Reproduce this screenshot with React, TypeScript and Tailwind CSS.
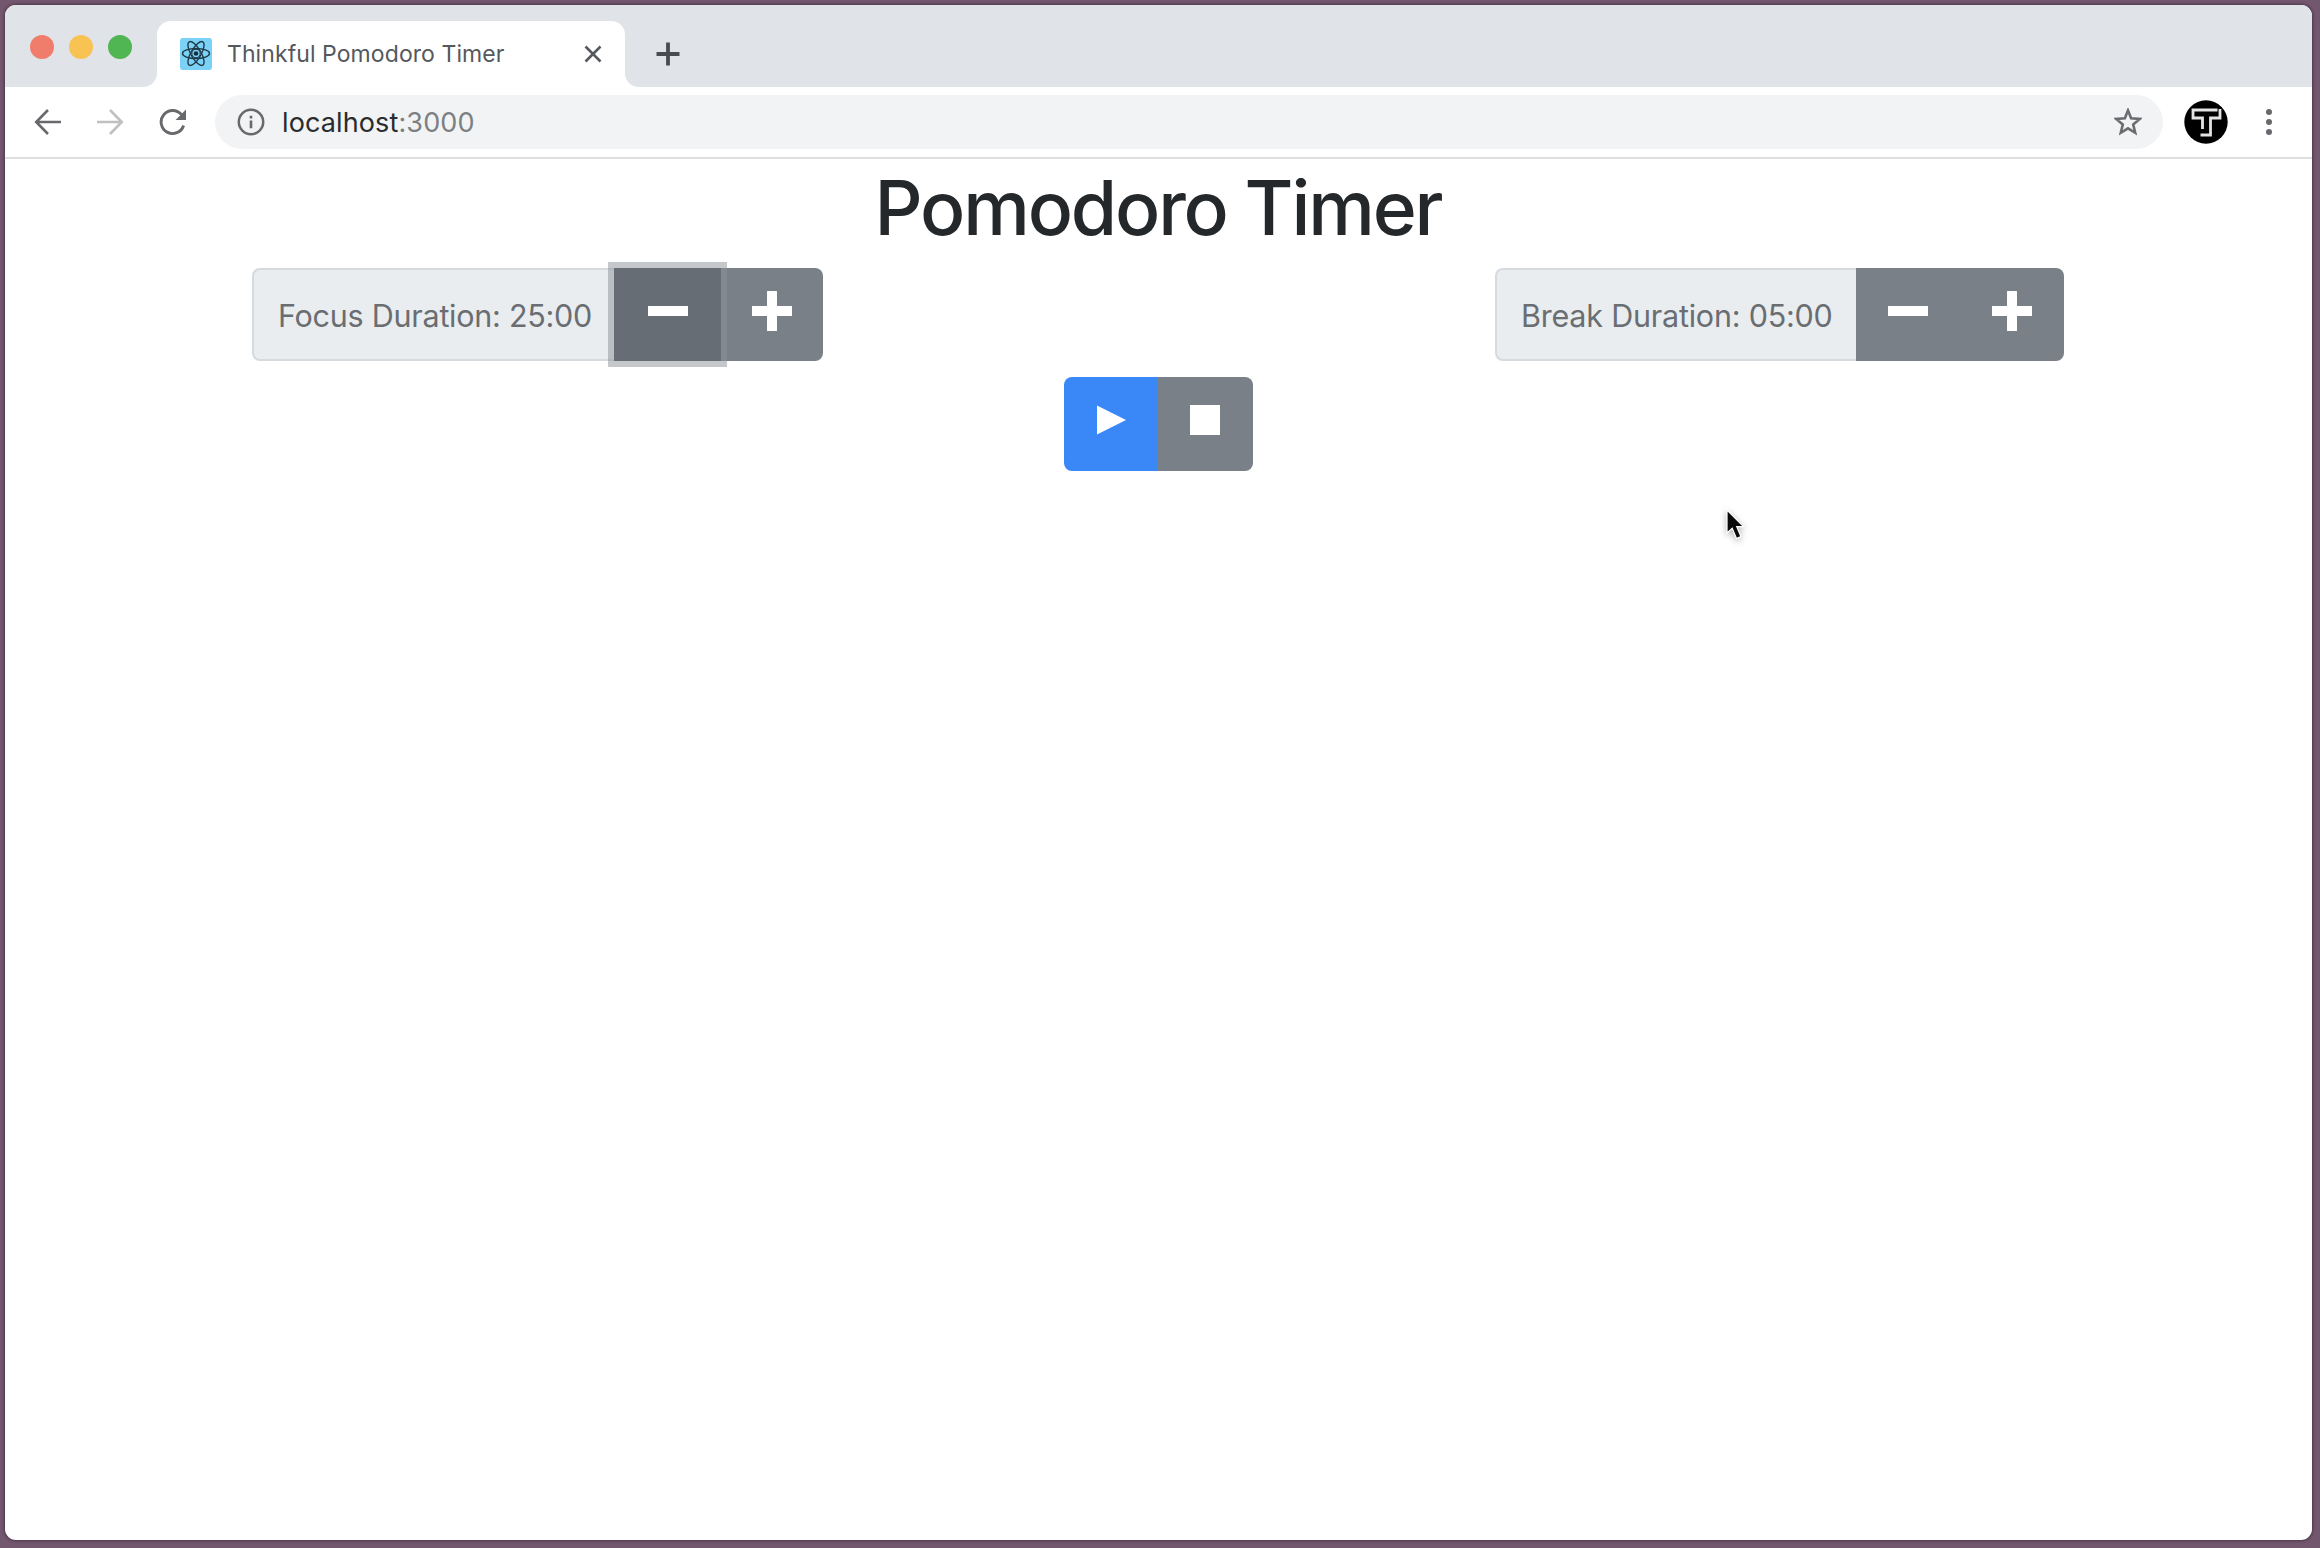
import type { ReactNode } from "react";

function ReactMark() {
  return (
    <svg viewBox="0 0 32 32" className="size-8 shrink-0">
      <rect width="32" height="32" rx="3" fill="#7bd1f6" />
      <g fill="none" stroke="#1f3947" strokeWidth="1.4">
        <ellipse cx="16" cy="15.5" rx="13.5" ry="5" />
        <ellipse cx="16" cy="15.5" rx="13.5" ry="5" transform="rotate(60 16 15.5)" />
        <ellipse cx="16" cy="15.5" rx="13.5" ry="5" transform="rotate(120 16 15.5)" />
        <circle cx="16" cy="15.5" r="4.2" strokeWidth="1.1" />
      </g>
      <circle cx="16" cy="15.5" r="2.3" fill="#14303f" />
    </svg>
  );
}

function TabStrip() {
  return (
    <div className="flex h-[82px] shrink-0 items-end bg-[#e0e3e8]">
      <div className="flex h-[82px] w-[138px] items-center gap-[15px] pl-[25px] pt-[2px]">
        <span className="size-6 shrink-0 rounded-full bg-[#f07d6b]" />
        <span className="size-6 shrink-0 rounded-full bg-[#f8c353]" />
        <span className="size-6 shrink-0 rounded-full bg-[#50b553]" />
      </div>
      <div className="size-[14px] bg-white">
        <div className="size-full rounded-br-[14px] bg-[#e0e3e8]" />
      </div>
      <div className="flex h-[66px] w-[468px] items-center rounded-t-[14px] bg-white pl-[23px] pr-[23px]">
        <ReactMark />
        <span className="ml-[15px] grow whitespace-nowrap pb-[1px] text-[23px] leading-8 tracking-[0.08px] text-[#55585c]">
          Thinkful Pomodoro Timer
        </span>
        <svg viewBox="0 0 18 18" className="size-[18px]" stroke="#55585c" strokeWidth="2.6">
          <path d="M1.5 1.5 16.5 16.5M16.5 1.5 1.5 16.5" />
        </svg>
      </div>
      <div className="size-[14px] bg-white">
        <div className="size-full rounded-bl-[14px] bg-[#e0e3e8]" />
      </div>
      <div className="flex h-[66px] items-center pl-[17px]">
        <svg viewBox="0 0 24 24" className="size-6" stroke="#484b50" strokeWidth="3.8">
          <path d="M12 .5v23M.5 12h23" />
        </svg>
      </div>
    </div>
  );
}

function Toolbar() {
  return (
    <div className="flex h-[72px] shrink-0 items-center border-b-2 border-[#dedfe1] bg-white">
      <svg viewBox="0 0 28 28" className="ml-[29px] size-7" fill="none" stroke="#67696c" strokeWidth="2.6">
        <path d="M27 14H3M14 2 2.2 14 14 26" />
      </svg>
      <svg viewBox="0 0 28 28" className="ml-[34px] size-7" fill="none" stroke="#bfc0c2" strokeWidth="2.6">
        <path d="M1 14h24M14 2l11.8 12L14 26" />
      </svg>
      <svg viewBox="0 0 28 28" className="ml-[35px] size-7" fill="none" stroke="#67696c" strokeWidth="2.9">
        <path d="M24.6 17.5A11.5 11.5 0 1 1 22.5 6.7" />
        <path d="M27 1.5v10.4H16.6z" fill="#67696c" stroke="none" />
      </svg>
      <div className="ml-[28px] flex h-[54px] w-[1948px] items-center rounded-full bg-[#f1f3f4]">
        <svg viewBox="0 0 28 28" className="ml-[22px] size-7" fill="none" stroke="#67696c" strokeWidth="2.5">
          <circle cx="14" cy="14" r="12.2" />
          <path d="M14 12.5v7.8M14 7.8v2.6" strokeWidth="2.6" />
        </svg>
        <span className="ml-[17px] grow whitespace-nowrap pt-[1px] text-[27px] leading-9 tracking-[0.12px] text-[#2a2c2f]">
          localhost<span className="text-[#7d8083]">:3000</span>
        </span>
        <svg viewBox="0 0 28 28" className="mr-[21px] size-7" fill="none" stroke="#6b6d70" strokeWidth="2.6">
          <path d="m14 2.400 3.100 7.900 8.700.6-6.600 5.500 2 8.400-7.200-4.500-7.200 4.500 2-8.400-6.600-5.500 8.700-.6z" />
        </svg>
      </div>
      <svg viewBox="0 0 44 44" className="ml-[21px] size-11" fill="none">
        <circle cx="22" cy="22" r="21.7" fill="#000" />
        <path d="M33.5 10H9v8h9.500v11M36 9v9h-9.500v17H16.500" stroke="#e4e4e4" strokeWidth="2.8" />
      </svg>
      <svg viewBox="0 0 8 28" className="ml-[37px] h-7 w-2" fill="#67696c">
        <circle cx="4" cy="4" r="3" />
        <circle cx="4" cy="14" r="3" />
        <circle cx="4" cy="24" r="3" />
      </svg>
    </div>
  );
}

function IconButton({ label, className, children }: { label: string; className: string; children: ReactNode }) {
  return (
    <button type="button" aria-label={label} className={`flex h-full items-start justify-center ${className}`}>
      {children}
    </button>
  );
}

function Minus() {
  return (
    <svg viewBox="0 0 40 40" className="mt-[23px] size-10" fill="#fff">
      <path d="M0 15h40v10H0z" />
    </svg>
  );
}

function Plus() {
  return (
    <svg viewBox="0 0 40 40" className="mt-[23px] size-10" fill="#fff">
      <path d="M15 0h10v15h15v10H25v15H15V25H0V15h15z" />
    </svg>
  );
}

export default function App() {
  return (
    <div className="h-[1548px] w-[2320px] overflow-hidden bg-[#73576f] pl-[5px] pt-[5px] font-['Inter',sans-serif]">
      <div className="flex h-[1535px] w-[2307px] flex-col overflow-hidden rounded-[11px] bg-white shadow-[0_0_3px_1px_rgba(50,35,50,0.6)]">
        <TabStrip />
        <Toolbar />
        <main className="flex flex-col pl-[247px] pr-[248px]">
          <h1 className="mb-[12px] text-center text-[75px] font-medium leading-[97px] tracking-[-2.15px] text-[#25282b]">
            Pomodoro Timer
          </h1>
          <div className="flex h-[93px] justify-between">
            <div className="flex">
              <div className="flex w-[362px] items-center rounded-l-[8px] border-2 border-r-0 border-[#d5dade] bg-[#e9edf0] pl-[24px] pt-[2px]">
                <span className="whitespace-nowrap text-[30.5px] tracking-[-0.25px] text-[#6a6d71]">
                  Focus Duration: 25:00
                </span>
              </div>
              <IconButton
                label="Decrease focus"
                className="relative z-10 w-[107px] bg-[#676d75] shadow-[0_0_0_6px_rgba(140,146,152,0.5)]"
              >
                <Minus />
              </IconButton>
              <IconButton label="Increase focus" className="w-[102px] rounded-r-[8px] bg-[#7a8088]">
                <Plus />
              </IconButton>
            </div>
            <div className="flex">
              <div className="flex w-[361px] items-center rounded-l-[8px] border-2 border-r-0 border-[#d5dade] bg-[#e9edf0] pl-[24px] pt-[2px]">
                <span className="whitespace-nowrap text-[30.5px] tracking-[-0.22px] text-[#6a6d71]">
                  Break Duration: 05:00
                </span>
              </div>
              <IconButton label="Decrease break" className="w-[104px] bg-[#7a8088]">
                <Minus />
              </IconButton>
              <IconButton label="Increase break" className="w-[104px] rounded-r-[8px] bg-[#7a8088]">
                <Plus />
              </IconButton>
            </div>
          </div>
          <div className="mt-[16px] flex h-[94px] justify-center">
            <IconButton label="Start" className="w-[94px] rounded-l-[8px] bg-[#3a88f7]">
              <svg viewBox="0 0 30 30" className="mt-[28px] size-[30px]" fill="#fff">
                <path d="M1 .5 30 15 1 29.500z" />
              </svg>
            </IconButton>
            <IconButton label="Stop" className="w-[95px] rounded-r-[8px] bg-[#7a8088]">
              <svg viewBox="0 0 30 30" className="mt-[28px] size-[30px]" fill="#fff">
                <path d="M0 0h30v30H0z" />
              </svg>
            </IconButton>
          </div>
        </main>
      </div>
      <svg
        viewBox="0 0 26 40"
        className="absolute left-[1724px] top-[506px] h-10 w-[26px] drop-shadow-[0_2px_3px_rgba(0,0,0,0.3)]"
      >
        <path
          d="M3 4v23l5.200-4.800 4.300 10.300 4.400-1.900-4.200-9.900h6.800z"
          fill="#0a0a0a"
          stroke="#fff"
          strokeWidth="1.2"
        />
      </svg>
    </div>
  );
}
